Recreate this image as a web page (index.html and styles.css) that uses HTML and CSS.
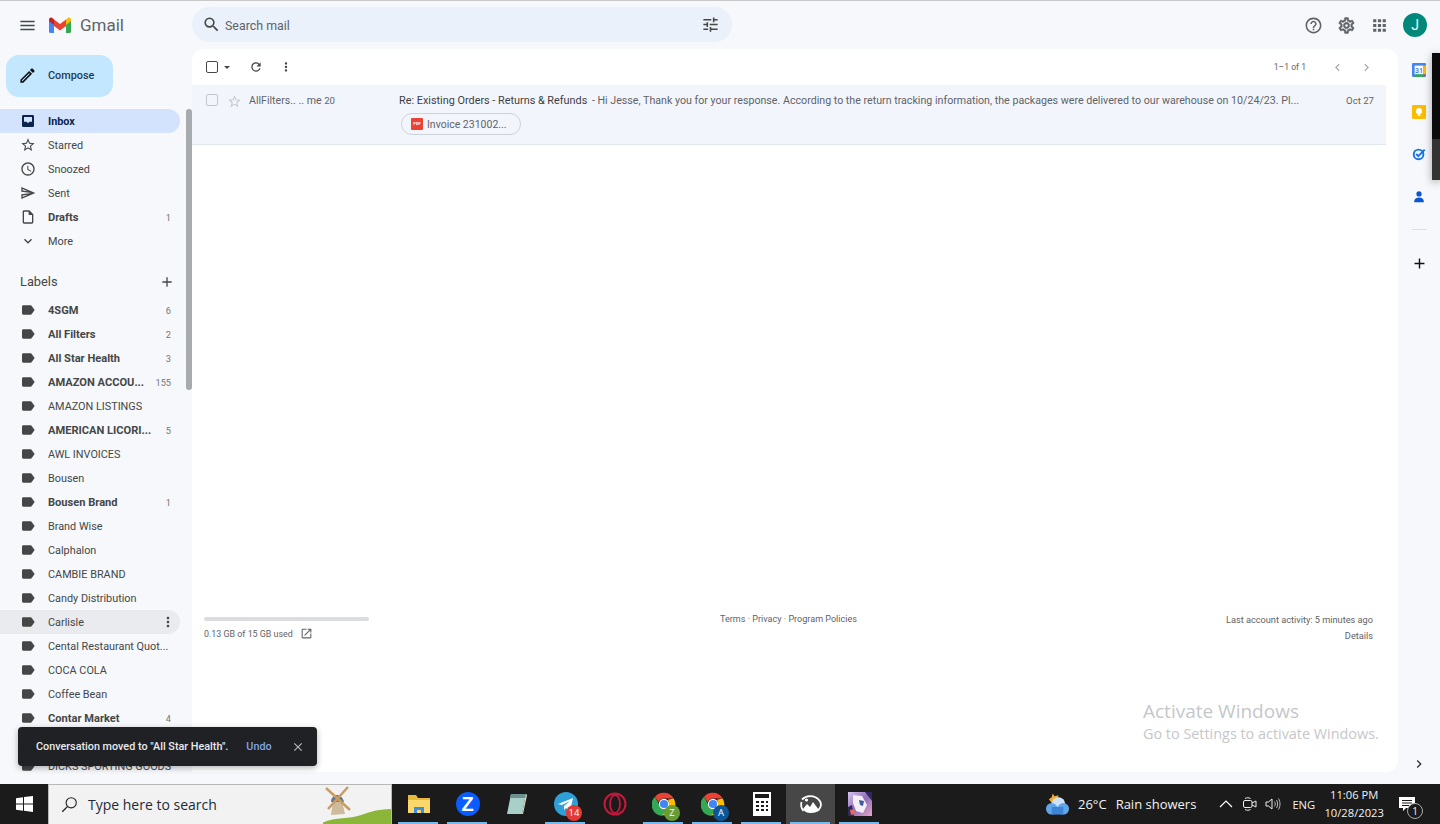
FILE: index.html
```html
<!doctype html>
<html lang="en-us">
  <head>
    <meta charset="utf-8" />
    <title>Inbox - Gmail</title>
    <link rel="stylesheet" href="styles.css">
  </head>
  <body>
    <!-- Icon sprite -->
    <svg class="sprite" xmlns="http://www.w3.org/2000/svg">
      <symbol id="i-menu" viewBox="0 0 24 24"><path d="M3 18h18v-2H3v2zm0-5h18v-2H3v2zm0-7v2h18V6H3z"/></symbol>
      <symbol id="i-search" viewBox="0 0 24 24"><path d="M15.5 14h-.79l-.28-.27A6.471 6.471 0 0 0 16 9.5 6.5 6.5 0 1 0 9.5 16c1.61 0 3.09-.59 4.23-1.57l.27.28v.79l5 4.99L20.49 19l-4.99-5zm-6 0C7.01 14 5 11.99 5 9.5S7.01 5 9.5 5 14 7.01 14 9.5 11.99 14 9.5 14z"/></symbol>
      <symbol id="i-tune" viewBox="0 0 24 24"><path d="M3 17v2h6v-2H3zM3 5v2h10V5H3zm10 16v-2h8v-2h-8v-2h-2v6h2zM7 9v2H3v2h4v2h2V9H7zm14 4v-2H11v2h10zm-6-4h2V7h4V5h-4V3h-2v6z"/></symbol>
      <symbol id="i-help" viewBox="0 0 24 24"><path d="M11 18h2v-2h-2v2zm1-16C6.48 2 2 6.48 2 12s4.48 10 10 10 10-4.48 10-10S17.52 2 12 2zm0 18c-4.41 0-8-3.59-8-8s3.59-8 8-8 8 3.59 8 8-3.59 8-8 8zm0-14c-2.21 0-4 1.79-4 4h2c0-1.1.9-2 2-2s2 .9 2 2c0 2-3 1.75-3 5h2c0-2.25 3-2.5 3-5 0-2.21-1.79-4-4-4z"/></symbol>
      <symbol id="i-gear" viewBox="0 0 24 24"><path d="M19.43 12.98c.04-.32.07-.64.07-.98 0-.34-.03-.66-.07-.98l2.11-1.65c.19-.15.24-.42.12-.64l-2-3.46c-.09-.16-.26-.25-.44-.25-.06 0-.12.01-.17.03l-2.49 1c-.52-.4-1.08-.73-1.69-.98l-.38-2.65C14.46 2.18 14.25 2 14 2h-4c-.25 0-.46.18-.49.42l-.38 2.65c-.61.25-1.17.59-1.69.98l-2.49-1c-.06-.02-.12-.03-.18-.03-.17 0-.34.09-.43.25l-2 3.46c-.13.22-.07.49.12.64l2.11 1.65c-.04.32-.07.65-.07.98 0 .33.03.66.07.98l-2.11 1.65c-.19.15-.24.42-.12.64l2 3.46c.09.16.26.25.44.25.06 0 .12-.01.17-.03l2.49-1c.52.4 1.08.73 1.69.98l.38 2.65c.03.24.24.42.49.42h4c.25 0 .46-.18.49-.42l.38-2.65c.61-.25 1.17-.59 1.69-.98l2.49 1c.06.02.12.03.18.03.17 0 .34-.09.43-.25l2-3.46c.12-.22.07-.49-.12-.64l-2.11-1.65zm-1.98-1.71c.04.31.05.52.05.73 0 .21-.02.43-.05.73l-.14 1.13.89.7 1.08.84-.7 1.21-1.27-.51-1.04-.42-.9.68c-.43.32-.84.56-1.25.73l-1.06.43-.16 1.13-.2 1.35h-1.4l-.19-1.35-.16-1.13-1.06-.43c-.43-.18-.83-.41-1.23-.71l-.91-.7-1.06.43-1.27.51-.7-1.21 1.08-.84.89-.7-.14-1.13c-.03-.31-.05-.54-.05-.74s.02-.43.05-.73l.14-1.13-.89-.7-1.08-.84.7-1.21 1.27.51 1.04.42.9-.68c.43-.32.84-.56 1.25-.73l1.06-.43.16-1.13.2-1.35h1.39l.19 1.35.16 1.13 1.06.43c.43.18.83.41 1.23.71l.91.7 1.06-.43 1.27-.51.7 1.21-1.07.85-.89.7.14 1.13zM12 8c-2.21 0-4 1.79-4 4s1.79 4 4 4 4-1.79 4-4-1.79-4-4-4zm0 6c-1.1 0-2-.9-2-2s.9-2 2-2 2 .9 2 2-.9 2-2 2z"/></symbol>
      <symbol id="i-apps" viewBox="0 0 24 24"><path d="M4 8h4V4H4v4zm6 12h4v-4h-4v4zm-6 0h4v-4H4v4zm0-6h4v-4H4v4zm6 0h4v-4h-4v4zm6-10v4h4V4h-4zm-6 4h4V4h-4v4zm6 6h4v-4h-4v4zm0 6h4v-4h-4v4z"/></symbol>
      <symbol id="i-edit" viewBox="0 0 24 24"><path d="M14.06 9.02l.92.92L5.92 19H5v-.92l9.06-9.06M17.66 3c-.25 0-.51.1-.7.29l-1.83 1.83 3.75 3.75 1.83-1.83c.39-.39.39-1.02 0-1.41l-2.34-2.34c-.2-.2-.45-.29-.71-.29zm-3.6 3.19L3 17.25V21h3.75L17.81 9.94l-3.75-3.75z"/></symbol>
      <symbol id="i-inbox" viewBox="0 0 24 24"><path fill-rule="evenodd" d="M5 3h14a2 2 0 0 1 2 2v14a2 2 0 0 1-2 2H5a2 2 0 0 1-2-2V5a2 2 0 0 1 2-2zm1 3v7h4l2 2.500 2-2.500h4V6H6z"/></symbol>
      <symbol id="i-star" viewBox="0 0 24 24"><path d="M22 9.24l-7.19-.62L12 2 9.19 8.63 2 9.24l5.46 4.73L5.82 21 12 17.27 18.18 21l-1.63-7.03L22 9.24zM12 15.4l-3.76 2.27 1-4.28-3.32-2.88 4.38-.38L12 6.1l1.71 4.04 4.38.38-3.32 2.88 1 4.28L12 15.4z"/></symbol>
      <symbol id="i-clock" viewBox="0 0 24 24"><path d="M11.99 2C6.47 2 2 6.48 2 12s4.47 10 9.99 10C17.52 22 22 17.52 22 12S17.52 2 11.99 2zM12 20c-4.42 0-8-3.58-8-8s3.58-8 8-8 8 3.58 8 8-3.58 8-8 8zm.5-13H11v6l5.25 3.15.75-1.23-4.5-2.67V7z"/></symbol>
      <symbol id="i-send" viewBox="0 0 24 24"><path d="M4.01 6.03l7.51 3.22-7.52-1 .01-2.22m7.5 8.72L4 17.97v-2.22l7.51-1M2.01 3L2 10l15 2-15 2 .01 7L23 12 2.01 3z"/></symbol>
      <symbol id="i-draft" viewBox="0 0 24 24"><path d="M14 2H6c-1.1 0-1.99.9-1.99 2L4 20c0 1.1.89 2 1.99 2H18c1.1 0 2-.9 2-2V8l-6-6zM6 20V4h7v5h5v11H6z"/></symbol>
      <symbol id="i-expand" viewBox="0 0 24 24"><path d="M16.59 8.59L12 13.17 7.41 8.59 6 10l6 6 6-6z"/></symbol>
      <symbol id="i-label" viewBox="0 0 24 24"><path d="M17.63 5.84C17.27 5.33 16.67 5 16 5L5 5.01C3.9 5.01 3 5.9 3 7v10c0 1.1.9 1.99 2 1.99L16 19c.67 0 1.27-.33 1.63-.84L22 12l-4.37-6.16z"/></symbol>
      <symbol id="i-add" viewBox="0 0 24 24"><path d="M19 13h-6v6h-2v-6H5v-2h6V5h2v6h6v2z"/></symbol>
      <symbol id="i-refresh" viewBox="0 0 24 24"><path d="M17.65 6.35A7.958 7.958 0 0 0 12 4c-4.42 0-7.99 3.58-7.99 8s3.57 8 7.99 8c3.73 0 6.84-2.55 7.73-6h-2.08A5.99 5.99 0 0 1 12 18c-3.31 0-6-2.69-6-6s2.69-6 6-6c1.66 0 3.14.69 4.22 1.78L13 11h7V4l-2.35 2.35z"/></symbol>
      <symbol id="i-more" viewBox="0 0 24 24"><path d="M12 8c1.1 0 2-.9 2-2s-.9-2-2-2-2 .9-2 2 .9 2 2 2zm0 2c-1.1 0-2 .9-2 2s.9 2 2 2 2-.9 2-2-.9-2-2-2zm0 6c-1.1 0-2 .9-2 2s.9 2 2 2 2-.9 2-2-.9-2-2-2z"/></symbol>
      <symbol id="i-left" viewBox="0 0 24 24"><path d="M15.41 7.41L14 6l-6 6 6 6 1.41-1.41L10.83 12z"/></symbol>
      <symbol id="i-right" viewBox="0 0 24 24"><path d="M10 6L8.59 7.41 13.17 12l-4.58 4.59L10 18l6-6z"/></symbol>
      <symbol id="i-open" viewBox="0 0 24 24"><path d="M19 19H5V5h7V3H5c-1.11 0-2 .9-2 2v14c0 1.1.89 2 2 2h14c1.1 0 2-.9 2-2v-7h-2v7zM14 3v2h3.59l-9.83 9.83 1.41 1.41L19 6.41V10h2V3h-7z"/></symbol>
      <symbol id="i-close" viewBox="0 0 24 24"><path d="M19 6.41L17.59 5 12 10.59 6.41 5 5 6.41 10.59 12 5 17.59 6.41 19 12 13.41 17.59 19 19 17.59 13.41 12z"/></symbol>
      <symbol id="i-chrome" viewBox="0 0 28 28">
        <path fill="#ea4335" d="M14 1a13 13 0 0 1 11.3 6.5H14a6.5 6.5 0 0 0-6.2 4.4L3.5 5.6A13 13 0 0 1 14 1z"/>
        <path fill="#34a853" d="M3.5 5.6l5.7 10.8a6.5 6.5 0 0 0 6.6 3.9l-3.6 7.6A13 13 0 0 1 3.5 5.6z"/>
        <path fill="#fbbc04" d="M25.3 7.5A13 13 0 0 1 12.2 27l5.6-9.6A6.5 6.5 0 0 0 18.500 9z"/>
        <circle cx="14" cy="14" r="6" fill="#fff"/>
        <circle cx="14" cy="14" r="4.800" fill="#4285f4"/>
      </symbol>
    </svg>

    <div class="top-line"></div>

    <header class="header">
      <div class="brand">
        <svg class="icon icon-menu"><use href="#i-menu"/></svg>
        <svg class="logo" viewBox="0 0 22 16">
          <path fill="#4285f4" d="M0 3v11.500A1.500 1.500 0 0 0 1.500 16H5V6.500z"/>
          <path fill="#34a853" d="M22 3v11.500a1.500 1.500 0 0 1-1.500 1.500H17V6.500z"/>
          <path fill="#ea4335" d="M5 9V2.500L11 7l6-4.500V9l-6 4.500z"/>
          <path fill="#fbbc04" d="M17 2.500l1.700-1.600C20 -0.200 22 .7 22 2.500V4l-5 4z"/>
          <path fill="#c5221f" d="M5 2.500L3.300 .9C2 -0.200 0 .7 0 2.500V4l5 4z"/>
        </svg>
        <span class="logo-text">Gmail</span>
      </div>
      <div class="search">
        <svg class="icon icon-dark"><use href="#i-search"/></svg>
        <span class="search-text">Search mail</span>
        <svg class="icon icon-dark"><use href="#i-tune"/></svg>
      </div>
      <div class="header-actions">
        <svg class="icon icon-action"><use href="#i-help"/></svg>
        <svg class="icon icon-action icon-gear"><use href="#i-gear"/></svg>
        <svg class="icon icon-action"><use href="#i-apps"/></svg>
        <div class="avatar">J</div>
      </div>
    </header>

    <div class="workspace">
      <!-- Left navigation -->
      <aside class="sidebar">
        <button class="compose">
          <svg class="icon compose-icon"><use href="#i-edit"/></svg>
          Compose
        </button>
        <nav class="nav">
          <div class="nav-row active"><svg class="icon"><use href="#i-inbox"/></svg><span class="nav-name">Inbox</span></div>
          <div class="nav-row"><svg class="icon"><use href="#i-star"/></svg><span class="nav-name">Starred</span></div>
          <div class="nav-row"><svg class="icon"><use href="#i-clock"/></svg><span class="nav-name">Snoozed</span></div>
          <div class="nav-row"><svg class="icon"><use href="#i-send"/></svg><span class="nav-name">Sent</span></div>
          <div class="nav-row unread"><svg class="icon"><use href="#i-draft"/></svg><span class="nav-name">Drafts</span><span class="nav-count">1</span></div>
          <div class="nav-row"><svg class="icon"><use href="#i-expand"/></svg><span class="nav-name">More</span></div>
        </nav>
        <div class="labels-head">
          <span>Labels</span>
          <svg class="icon"><use href="#i-add"/></svg>
        </div>
        <nav class="nav">
          <div class="nav-row unread"><svg class="icon"><use href="#i-label"/></svg><span class="nav-name">4SGM</span><span class="nav-count">6</span></div>
          <div class="nav-row unread"><svg class="icon"><use href="#i-label"/></svg><span class="nav-name">All Filters</span><span class="nav-count">2</span></div>
          <div class="nav-row unread"><svg class="icon"><use href="#i-label"/></svg><span class="nav-name">All Star Health</span><span class="nav-count">3</span></div>
          <div class="nav-row unread"><svg class="icon"><use href="#i-label"/></svg><span class="nav-name">AMAZON ACCOU...</span><span class="nav-count">155</span></div>
          <div class="nav-row"><svg class="icon"><use href="#i-label"/></svg><span class="nav-name">AMAZON LISTINGS</span></div>
          <div class="nav-row unread"><svg class="icon"><use href="#i-label"/></svg><span class="nav-name">AMERICAN LICORI...</span><span class="nav-count">5</span></div>
          <div class="nav-row"><svg class="icon"><use href="#i-label"/></svg><span class="nav-name">AWL INVOICES</span></div>
          <div class="nav-row"><svg class="icon"><use href="#i-label"/></svg><span class="nav-name">Bousen</span></div>
          <div class="nav-row unread"><svg class="icon"><use href="#i-label"/></svg><span class="nav-name">Bousen Brand</span><span class="nav-count">1</span></div>
          <div class="nav-row"><svg class="icon"><use href="#i-label"/></svg><span class="nav-name">Brand Wise</span></div>
          <div class="nav-row"><svg class="icon"><use href="#i-label"/></svg><span class="nav-name">Calphalon</span></div>
          <div class="nav-row"><svg class="icon"><use href="#i-label"/></svg><span class="nav-name">CAMBIE BRAND</span></div>
          <div class="nav-row"><svg class="icon"><use href="#i-label"/></svg><span class="nav-name">Candy Distribution</span></div>
          <div class="nav-row hover"><svg class="icon"><use href="#i-label"/></svg><span class="nav-name">Carlisle</span><svg class="icon icon-row-more"><use href="#i-more"/></svg></div>
          <div class="nav-row"><svg class="icon"><use href="#i-label"/></svg><span class="nav-name">Cental Restaurant Quot...</span></div>
          <div class="nav-row"><svg class="icon"><use href="#i-label"/></svg><span class="nav-name">COCA COLA</span></div>
          <div class="nav-row"><svg class="icon"><use href="#i-label"/></svg><span class="nav-name">Coffee Bean</span></div>
          <div class="nav-row unread"><svg class="icon"><use href="#i-label"/></svg><span class="nav-name">Contar Market</span><span class="nav-count">4</span></div>
          <div class="nav-row"></div>
          <div class="nav-row"><svg class="icon"><use href="#i-label"/></svg><span class="nav-name">DICKS SPORTING GOODS</span></div>
        </nav>
        <div class="nav-thumb"></div>
      </aside>

      <!-- Message list -->
      <main class="panel">
        <div class="toolbar">
          <span class="checkbox"></span>
          <span class="caret"></span>
          <svg class="icon tool-refresh"><use href="#i-refresh"/></svg>
          <svg class="icon tool-more"><use href="#i-more"/></svg>
          <span class="pager">1–1 of 1</span>
          <svg class="icon pager-btn"><use href="#i-left"/></svg>
          <svg class="icon pager-btn"><use href="#i-right"/></svg>
        </div>
        <div class="message">
          <div class="message-line">
            <span class="checkbox checkbox-light"></span>
            <svg class="icon icon-star"><use href="#i-star"/></svg>
            <span class="sender">AllFilters.. .. me <span class="thread-count">20</span></span>
            <span class="snippet">Re: Existing Orders - Returns &amp; Refunds<span class="snippet-body"> - Hi Jesse, Thank you for your response. According to the return tracking information, the packages were delivered to our warehouse on 10/24/23. Pl...</span></span>
            <span class="date">Oct 27</span>
          </div>
          <div class="chip">
            <span class="pdf">PDF</span>
            <span>Invoice 231002...</span>
          </div>
        </div>
        <footer class="panel-footer">
          <div class="storage">
            <div class="storage-bar"></div>
            <div class="storage-text">0.13 GB of 15 GB used <svg class="icon icon-open"><use href="#i-open"/></svg></div>
          </div>
          <div class="terms">Terms · Privacy · Program Policies</div>
          <div class="activity">
            <div>Last account activity: 5 minutes ago</div>
            <div class="details">Details</div>
          </div>
        </footer>
      </main>

      <!-- Side apps -->
      <aside class="rail">
        <svg class="rail-icon" viewBox="0 0 16 16">
          <rect width="16" height="16" rx="1.500" fill="#4285f4"/>
          <rect x="3" y="3" width="10" height="10" fill="#fff"/>
          <path fill="#fbbc04" d="M13 3h3v10h-3z"/>
          <path fill="#34a853" d="M3 13h10v3H3z"/>
          <path fill="#ea4335" d="M13 13h3l-3 3z"/>
          <text class="calendar-day" x="8" y="11">31</text>
        </svg>
        <svg class="rail-icon" viewBox="0 0 16 16">
          <rect width="16" height="16" rx="1.500" fill="#fbbc04"/>
          <circle cx="8" cy="7" r="3.500" fill="#fff"/>
          <rect x="6.500" y="10.500" width="3" height="2" fill="#fff"/>
        </svg>
        <svg class="rail-icon" viewBox="0 0 16 16">
          <circle cx="7.500" cy="8.500" r="5.500" fill="none" stroke="#1a73e8" stroke-width="2.200"/>
          <path d="M4.800 8l2.400 2.400L14.500 3" fill="none" stroke="#1a73e8" stroke-width="2.200"/>
        </svg>
        <svg class="rail-icon rail-contacts" viewBox="0 0 16 16">
          <circle cx="8" cy="4.500" r="3" fill="#0b57d0"/>
          <path fill="#0b57d0" d="M2.500 13c0-3 2.500-4.500 5.500-4.500s5.500 1.500 5.500 4.500v1h-11z"/>
        </svg>
        <div class="rail-divider"></div>
        <svg class="icon rail-add"><use href="#i-add"/></svg>
        <svg class="icon rail-toggle"><use href="#i-right"/></svg>
      </aside>
    </div>

    <!-- Other window peeking in from the right edge -->
    <div class="peek-window"><div class="peek-inner"></div></div>

    <div class="watermark">
      <div class="watermark-title">Activate Windows</div>
      <div>Go to Settings to activate Windows.</div>
    </div>

    <div class="toast">
      <span class="toast-text">Conversation moved to "All Star Health".</span>
      <span class="toast-undo">Undo</span>
      <svg class="icon toast-close"><use href="#i-close"/></svg>
    </div>

    <!-- Windows taskbar -->
    <footer class="taskbar">
      <div class="start">
        <svg class="start-logo" viewBox="0 0 17 16"><path fill="#fff" d="M0 2.300l7-1v6.300H0zM8 1.100l9-1.100v7.600H8zM0 8.400h7v6.300l-7-1zM8 8.400h9V16l-9-1.200z"/></svg>
      </div>
      <div class="task-search">
        <svg class="task-search-icon" viewBox="0 0 20 20"><circle cx="12" cy="8" r="6" fill="none" stroke="#222" stroke-width="1.300"/><path d="M7.500 12.500L1.500 18.500" stroke="#222" stroke-width="1.600"/></svg>
        <span class="task-search-text">Type here to search</span>
        <svg class="task-search-art" viewBox="0 0 68 40">
          <path fill="#8bb63a" d="M-4 40C8 31 26 35 38 30c10-4 20-6 30-6v16z"/>
          <path fill="#cdbb9c" d="M8 30l2-14h9l3 13z"/>
          <path fill="#66788f" d="M8 17c0-5 4-7 6-7s6 2 7 7z"/>
          <path d="M3 3l24 22M25 2L5 24" stroke="#c99d62" stroke-width="2.500"/>
        </svg>
      </div>
      <div class="task-apps">
        <div class="task-app open">
          <svg class="task-icon" viewBox="0 0 24 24"><path fill="#e8b93a" d="M1 3h8l2 3h12v15H1z"/><path fill="#fcd86a" d="M1 8h22v13H1z"/><path fill="#3f8fd8" d="M7 15h10v6h-3v-3h-4v3H7z"/></svg>
        </div>
        <div class="task-app open">
          <div class="zoom-mark">Z</div>
        </div>
        <div class="task-app">
          <svg class="task-icon" viewBox="0 0 24 24"><path fill="#a8cfc8" d="M6 2h15l-4 20H2z"/><path fill="#6d8f8d" d="M6 2h15l-1 4H5z"/><path fill="#e9e3c8" d="M17 22l4-20 1 1-4 19z"/></svg>
        </div>
        <div class="task-app open">
          <svg class="task-icon" viewBox="0 0 24 24"><circle cx="12" cy="12" r="12" fill="#2f9fd8"/><path fill="#fff" d="M4 12l15-6-3 13-4-3-2 2v-4l6-5-8 4z"/></svg>
          <span class="task-badge red">14</span>
        </div>
        <div class="task-app">
          <svg class="task-icon" viewBox="0 0 24 24"><circle cx="12" cy="12" r="10.500" fill="none" stroke="#c8173c" stroke-width="2"/><ellipse cx="12" cy="12" rx="5" ry="9" fill="none" stroke="#c8173c" stroke-width="1.800"/></svg>
        </div>
        <div class="task-app open">
          <svg class="task-icon"><use href="#i-chrome"/></svg>
          <span class="task-badge green">Z</span>
        </div>
        <div class="task-app open">
          <svg class="task-icon"><use href="#i-chrome"/></svg>
          <span class="task-badge blue">A</span>
        </div>
        <div class="task-app open">
          <svg class="task-icon" viewBox="0 0 24 24"><path fill="#fff" fill-rule="evenodd" d="M3 0h18v24H3zM5 2v4h14V2zM6 9v2h3V9zm5 0v2h3V9zm5 0v2h2V9zM6 13v2h3v-2zm5 0v2h3v-2zm5 0v2h2v-2zM6 17v2h3v-2zm5 0v2h3v-2zm5 0v2h2v-2z"/></svg>
        </div>
        <div class="task-app open current">
          <svg class="task-icon" viewBox="0 0 24 24">
            <path d="M3 7.500A11 10 0 0 1 22 12a11 9 0 0 1-4 7" fill="none" stroke="#fff" stroke-width="1.800"/>
            <path d="M2.500 10a10 10 0 0 0 2 9" fill="none" stroke="#fff" stroke-width="1.800"/>
            <path fill="#fff" d="M4 17l4-5 3 3 3-5 6 8c-2 2-4 3-8 3s-6-1-8-4z"/>
            <circle cx="7.500" cy="8" r="1.600" fill="#fff"/>
          </svg>
        </div>
        <div class="task-app open">
          <svg class="task-icon" viewBox="0 0 24 24">
            <defs><linearGradient id="thumb" x1="0" y1="0" x2="1" y2="1"><stop offset="0" stop-color="#d8c4ee"/><stop offset=".5" stop-color="#8f6db8"/><stop offset="1" stop-color="#e6a7c8"/></linearGradient></defs>
            <rect width="24" height="24" fill="url(#thumb)"/>
            <path fill="#f5eef6" d="M5 3l9 1 5 9-4 8-7-2-3-8z"/>
            <path fill="#2f2a5c" d="M0 15l4-2 2 11H0zM17 0h7v9z"/>
            <path fill="#e86a5c" d="M2 18l4-1 1 5-4 1z"/>
            <path fill="#3f5f9c" d="M11 8l5 1-1 5-3-1z"/>
          </svg>
        </div>
      </div>
      <div class="tray">
        <div class="weather">
          <svg class="weather-icon" viewBox="0 0 26 24"><path fill="#f2a93b" d="M8 1l2 3 4-1-1 5-6 3-3-4 3-2z"/><circle cx="14" cy="12" r="7" fill="#cfe3f8"/><circle cx="7" cy="17" r="6" fill="#62a6ea"/><circle cx="19" cy="17" r="6" fill="#62a6ea"/><rect x="7" y="15" width="12" height="8" fill="#3f84d4"/></svg>
          <span>26°C</span>
          <span>Rain showers</span>
        </div>
        <svg class="tray-caret" viewBox="0 0 14 8"><path d="M1 7l6-6 6 6" fill="none" stroke="#fff" stroke-width="1.200"/></svg>
        <svg class="tray-icon" viewBox="0 0 16 16"><rect x="1.500" y="4.500" width="8.500" height="7" rx="1.500" fill="none" stroke="#eee"/><path d="M10 7l4-2v6l-4-2" fill="none" stroke="#eee"/><path d="M3 2.500c1.500-1 4-1 5.500 0M3 13.500c1.500 1 4 1 5.500 0" fill="none" stroke="#eee"/></svg>
        <svg class="tray-icon tray-volume" viewBox="0 0 16 16"><path d="M1 6v4h2.500L7 13V3L3.500 6z" fill="none" stroke="#eee"/><path d="M9.500 5.500c1 1.500 1 3.500 0 5M11.500 4c1.500 2.500 1.500 5.500 0 8M13.500 2.500c2 3.500 2 7.500 0 11" fill="none" stroke="#bbb"/></svg>
        <span class="tray-lang">ENG</span>
        <div class="clock">
          <div>11:06 PM</div>
          <div>10/28/2023</div>
        </div>
        <div class="notify">
          <svg class="notify-icon" viewBox="0 0 16 16"><path fill="#fff" fill-rule="evenodd" d="M0 1h16v11H7l-3 3v-3H0zM3 4v1h10V4zM3 6.500v1h10v-1zM3 9v1h7V9z"/></svg>
          <span class="notify-badge">1</span>
        </div>
      </div>
    </footer>
  </body>
</html>
```

FILE: styles.css
```css
* {
  box-sizing: border-box;
}

html,
body {
  height: 100%;
}

body {
  margin: 0;
  display: flex;
  flex-direction: column;
  position: relative;
  overflow: hidden;
  background: #f6f8fc;
  color: #444746;
  font-family: Roboto, 'Liberation Sans', sans-serif;
  font-size: 10.85px;
}

.sprite {
  display: none;
}

.icon {
  width: 16px;
  height: 16px;
  flex: none;
  fill: currentColor;
}

.top-line {
  height: 1px;
  flex: none;
  background: #c9c9c9;
}

/* Header */
.header {
  height: 48px;
  flex: none;
  display: flex;
  align-items: center;
}

.brand {
  width: 192px;
  flex: none;
  display: flex;
  align-items: center;
  color: #5f6368;
}

.icon-menu {
  width: 19px;
  height: 19px;
  margin-left: 18px;
  color: #444746;
}

.logo {
  width: 22px;
  height: 16px;
  margin-left: 12px;
}

.logo-text {
  margin-left: 9px;
  font-size: 17px;
}

.search {
  width: 540px;
  height: 35px;
  flex: none;
  margin-top: -1px;
  padding: 0 12px 0 10px;
  display: flex;
  align-items: center;
  background: #eaf1fb;
  border-radius: 18px;
}

.icon-dark {
  width: 19px;
  height: 19px;
  color: #444746;
}

.search-text {
  flex: 1;
  margin-left: 4px;
  padding-top: 2px;
  font-size: 12.4px;
  color: #5f6368;
}

.header-actions {
  flex: 1;
  padding-right: 13px;
  display: flex;
  align-items: center;
  justify-content: flex-end;
}

.icon-action {
  width: 19px;
  height: 19px;
  margin-right: 14px;
  color: #5f6368;
}

.icon-gear {
  stroke: currentColor;
  stroke-width: 0.6px;
}

.avatar {
  width: 24px;
  height: 24px;
  border-radius: 50%;
  background: #00897b;
  color: #fff;
  font-size: 14px;
  line-height: 24px;
  text-align: center;
}

/* Workspace */
.workspace {
  height: 723px;
  flex: none;
  display: flex;
}

.sidebar {
  width: 192px;
  flex: none;
  position: relative;
  overflow: hidden;
}

.compose {
  width: 107px;
  height: 42px;
  margin: 6px 0 12px 6px;
  padding: 0 0 2px 12px;
  display: flex;
  align-items: center;
  gap: 11px;
  border: none;
  border-radius: 13px;
  background: #c2e7ff;
  color: #1f3b57;
  font-family: inherit;
  font-size: 10.85px;
  font-weight: 500;
}

.compose-icon {
  width: 19px;
  height: 19px;
  color: #111;
}

.nav-row {
  width: 180px;
  height: 24px;
  padding: 0 9px 0 20px;
  display: flex;
  align-items: center;
  border-radius: 0 12px 12px 0;
  white-space: nowrap;
}

.nav-name {
  flex: 1;
  margin-left: 12px;
}

.nav-count {
  font-size: 9.2px;
  color: #747775;
}

.nav-row.unread .nav-name {
  font-size: 11.1px;
  font-weight: 700;
  color: #444746;
}

.nav-row.active {
  background: #d3e3fd;
  color: #0b2350;
}

.nav-row.active .nav-name {
  font-weight: 700;
  color: #0b2350;
}

.nav-row.hover {
  background: #e9ebee;
}

.icon-row-more {
  width: 16px;
  margin-right: -5px;
  color: #444746;
}

.labels-head {
  width: 180px;
  height: 45px;
  padding: 21px 5px 0 20px;
  display: flex;
  align-items: flex-start;
  justify-content: space-between;
  font-size: 12.8px;
}

.nav-thumb {
  width: 6px;
  height: 281px;
  position: absolute;
  top: 60px;
  right: 0;
  border-radius: 3px;
  background: #a8abad;
}

/* Message panel */
.panel {
  flex: 1;
  display: flex;
  flex-direction: column;
  background: #fff;
  border-radius: 12px 12px 12px 0;
  color: #5f6368;
}

.toolbar {
  height: 36px;
  flex: none;
  padding: 0 24px 0 14px;
  display: flex;
  align-items: center;
}

.checkbox {
  width: 12px;
  height: 12px;
  flex: none;
  border: 1.500px solid #444746;
  border-radius: 2px;
}

.caret {
  width: 0;
  height: 0;
  margin-left: 6px;
  border: 3.500px solid transparent;
  border-top: 3.500px solid #444746;
  border-bottom: 0;
}

.tool-refresh {
  margin-left: 19px;
  width: 14px;
  height: 14px;
  color: #444746;
}

.tool-more {
  margin-left: 16px;
  width: 14px;
  height: 14px;
  color: #444746;
}

.pager {
  margin-left: auto;
  margin-right: 10px;
  font-size: 8.6px;
  color: #5f6368;
}

.pager-btn {
  width: 15px;
  height: 15px;
  margin-left: 14px;
  color: #a8abad;
}

.message {
  width: 1194px;
  height: 60px;
  flex: none;
  padding: 0 12px 0 14px;
  background: #f2f6fc;
  border-bottom: 1px solid #e3e8ef;
}

.message-line {
  height: 30px;
  display: flex;
  align-items: center;
}

.checkbox-light {
  border-color: #c4c7c9;
}

.icon-star {
  width: 15px;
  height: 15px;
  margin-left: 9px;
  margin-top: 2px;
  color: #c4c7c9;
}

.sender {
  width: 150px;
  margin-left: 7px;
  flex: none;
  font-size: 10.6px;
  color: #5f6368;
}

.thread-count {
  font-size: 9.6px;
}

.snippet {
  flex: 1;
  color: #3c4043;
  white-space: nowrap;
}

.snippet-body {
  margin-left: 2px;
  font-size: 10.67px;
  color: #5f6368;
}

.date {
  font-size: 9.6px;
  color: #5f6368;
}

.chip {
  width: 120px;
  height: 22px;
  margin: -2px 0 0 195px;
  padding-left: 9px;
  display: flex;
  align-items: center;
  gap: 4px;
  border: 1px solid #cdd3da;
  border-radius: 11px;
  font-size: 10.5px;
  white-space: nowrap;
}

.pdf {
  width: 12px;
  height: 12px;
  border-radius: 1px;
  background: #ea4335;
  color: #fff;
  font-size: 4px;
  font-weight: 700;
  line-height: 12px;
  text-align: center;
}

.panel-footer {
  margin-top: 467px;
  padding: 0 25px 0 12px;
  display: grid;
  grid-template-columns: 1fr 1fr 1fr;
  font-size: 9.2px;
}

.storage-bar {
  width: 165px;
  height: 4px;
  margin: 5px 0 6px;
  border-radius: 2px;
  background: #dadce0;
}

.storage-text {
  display: flex;
  align-items: center;
  gap: 7px;
  font-size: 8.9px;
}

.icon-open {
  width: 13px;
  height: 13px;
}

.terms {
  padding-top: 2px;
  text-align: center;
  font-size: 9.05px;
}

.activity {
  text-align: right;
  padding-top: 2px;
}

.details {
  margin-top: 5px;
}

/* Right rail */
.rail {
  width: 42px;
  flex: none;
  position: relative;
  padding-top: 14px;
  display: flex;
  flex-direction: column;
  align-items: center;
}

.rail-icon {
  width: 14px;
  height: 14px;
  margin-bottom: 28px;
}

.rail-contacts {
  margin-top: 1px;
  margin-bottom: 27px;
}

.calendar-day {
  fill: #4285f4;
  font-size: 8px;
  font-weight: 700;
  text-anchor: middle;
}

.rail-divider {
  width: 15px;
  height: 1px;
  margin-top: -2px;
  background: #dfe1e5;
}

.rail-add {
  margin-top: 25px;
  width: 17px;
  height: 17px;
  color: #111;
}

.rail-toggle {
  position: absolute;
  bottom: 0;
  left: 13px;
  color: #333;
}

/* Overlays */
.peek-window {
  width: 8px;
  height: 127px;
  position: absolute;
  top: 53px;
  right: 0;
  padding-top: 86px;
  background: #0b0b0b;
  box-shadow: 0 2px 8px rgba(0, 0, 0, 0.35);
}

.peek-inner {
  height: 41px;
  background: #333;
}

.watermark {
  position: absolute;
  left: 1143px;
  top: 698px;
  color: #c5c7ca;
  font-family: 'Open Sans', sans-serif;
  font-size: 14.4px;
}

.watermark-title {
  font-size: 19px;
}

.toast {
  width: 299px;
  height: 39px;
  position: absolute;
  left: 18px;
  top: 727px;
  padding: 0 12px 0 18px;
  display: flex;
  align-items: center;
  border-radius: 4px;
  background: #202124;
  box-shadow: 0 2px 6px rgba(0, 0, 0, 0.3);
  color: #e8eaed;
  font-size: 10.8px;
  font-weight: 500;
  white-space: nowrap;
}

.toast-undo {
  margin-left: 18px;
  color: #7fa7e3;
}

.toast-close {
  margin-left: auto;
  width: 14px;
  height: 14px;
  color: #b6b8bb;
}

/* Taskbar */
.taskbar {
  height: 40px;
  flex: none;
  margin-top: 12px;
  display: flex;
  background: #1b1b1b;
  color: #f2f2f2;
  font-family: 'Open Sans', sans-serif;
}

.start {
  width: 48px;
  flex: none;
  display: flex;
  align-items: center;
  justify-content: center;
}

.start-logo {
  width: 17px;
  height: 16px;
}

.task-search {
  width: 344px;
  flex: none;
  display: flex;
  align-items: center;
  overflow: hidden;
  background: #f2f2f2;
  border: 1px solid #b8b8b8;
  border-bottom: none;
  color: #1c2b3a;
}

.task-search-icon {
  width: 17px;
  height: 17px;
  margin-left: 12px;
}

.task-search-text {
  margin-left: 10px;
  font-size: 14px;
  white-space: nowrap;
}

.task-search-art {
  width: 68px;
  height: 40px;
  margin-left: auto;
}

.task-apps {
  display: flex;
  margin-left: 2px;
}

.task-app {
  width: 49px;
  flex: none;
  position: relative;
  display: flex;
  align-items: center;
  justify-content: center;
}

.task-app.open::after {
  content: '';
  position: absolute;
  left: 4px;
  right: 5px;
  bottom: 0;
  height: 2px;
  background: #76b9ed;
}

.task-app.current {
  background: #474747;
}

.task-icon {
  width: 24px;
  height: 24px;
}

.zoom-mark {
  width: 24px;
  height: 24px;
  border-radius: 50%;
  background: #0b5cff;
  color: #fff;
  font-family: 'Liberation Sans', sans-serif;
  font-size: 20px;
  font-weight: 700;
  line-height: 24px;
  text-align: center;
}

.task-badge {
  min-width: 16px;
  height: 16px;
  position: absolute;
  left: 25px;
  top: 21px;
  border-radius: 8px;
  color: #fff;
  font-size: 9.500px;
  line-height: 16px;
  text-align: center;
}

.task-badge.red {
  background: #e53935;
}

.task-badge.green {
  background: #6a9c36;
}

.task-badge.blue {
  background: #0d5799;
}

.tray {
  flex: 1;
  padding-left: 161px;
  display: flex;
  align-items: center;
  font-size: 11.2px;
}

.weather {
  display: flex;
  align-items: center;
  gap: 9px;
  font-size: 13px;
  white-space: nowrap;
}

.weather-icon {
  width: 25px;
  height: 24px;
  margin-right: -1px;
}

.tray-caret {
  width: 14px;
  height: 8px;
  margin-left: 23px;
}

.tray-icon {
  width: 16px;
  height: 16px;
  margin-left: 9px;
}

.tray-volume {
  margin-left: 7px;
}

.tray-lang {
  margin-left: 11px;
}

.clock {
  width: 62px;
  margin-left: 8px;
  text-align: center;
  line-height: 18px;
}

.notify {
  position: relative;
  margin-left: 14px;
}

.notify-icon {
  width: 16px;
  height: 16px;
  display: block;
}

.notify-badge {
  width: 16px;
  height: 16px;
  position: absolute;
  left: 8px;
  top: 7px;
  border: 1px solid #aaa;
  border-radius: 50%;
  background: #1b1b1b;
  font-size: 10px;
  line-height: 14px;
  text-align: center;
}
```
